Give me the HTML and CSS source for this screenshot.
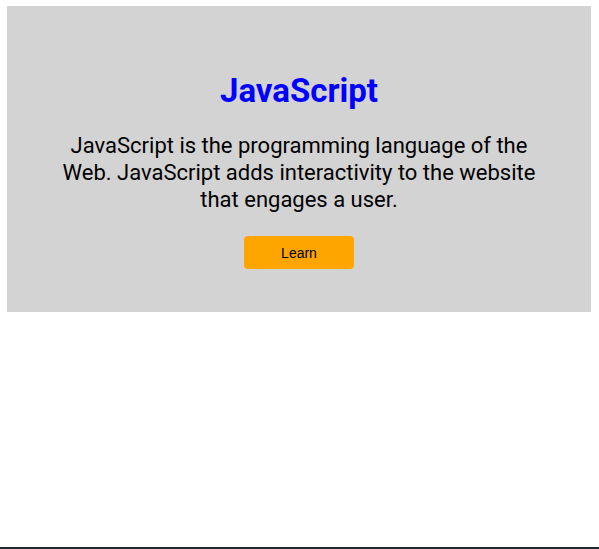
FILE: index.html
```html
<!DOCTYPE html>
<html>
<head>
<meta charset="utf-8">
<link rel="stylesheet" href="styles.css">
</head>
<body>
<div class="page">
  <section class="hero">
    <h1 class="title">JavaScript</h1>
    <p class="text">JavaScript is the programming language of the Web. JavaScript adds interactivity to the website that engages a user.</p>
    <button class="btn">Learn</button>
  </section>
  <div class="rule"></div>
</div>
</body>
</html>
```
FILE: styles.css
```css
html, body { margin: 0; padding: 0; background: #fff; }
.page {
  min-height: 549px;
  height: 549px;
  box-sizing: border-box;
  display: flex;
  flex-direction: column;
  padding: 6px 8px 0 7px;
  font-family: Roboto, "Liberation Sans", sans-serif;
}
.hero {
  background: #d3d3d3;
  height: 306px;
  box-sizing: border-box;
  padding: 66px 50px 0;
  display: flex;
  flex-direction: column;
  align-items: center;
  text-align: center;
}
.title {
  margin: 0;
  font-size: 33px;
  font-weight: 700;
  line-height: 38px;
  color: #0000ff;
}
.text {
  margin: 22px 0 0;
  font-size: 22px;
  line-height: 27px;
  color: #000;
}
.btn {
  margin-top: 23px;
  width: 110px;
  height: 33px;
  border: none;
  border-radius: 4px;
  background: #ffa500;
  color: #000;
  font-family: "Liberation Sans", Arial, sans-serif;
  font-size: 14px;
}
.rule {
  margin: auto -8px 0 -7px;
  height: 2px;
  background: #1f2a33;
}
```
